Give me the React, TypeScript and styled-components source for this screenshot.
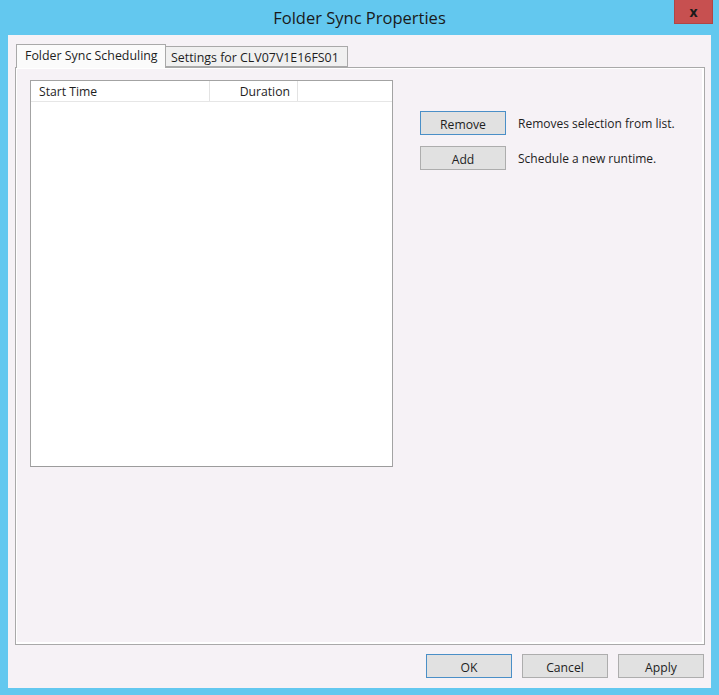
import React from "react";
import styled, { createGlobalStyle } from "styled-components";

const Global = createGlobalStyle`
  html, body { margin: 0; padding: 0; }
  body {
    background: #63c8ef;
    font-family: "Open Sans", "Noto Sans", "Liberation Sans", sans-serif;
    color: #1e1e1e;
  }
  * { box-sizing: border-box; }
`;

const Window = styled.div`
  width: 719px;
  height: 695px;
  background: #63c8ef;
  display: flex;
  flex-direction: column;
`;

const TitleBar = styled.div`
  height: 35px;
  display: grid;
  grid-template-columns: 1fr auto 1fr;
  align-items: start;
`;

const Title = styled.div`
  grid-column: 2;
  font-size: 16.5px;
  line-height: 35px;
  color: #1a1a1a;
`;

const CloseButton = styled.button`
  grid-column: 3;
  justify-self: end;
  margin-right: 6px;
  width: 39px;
  height: 24px;
  border: 1px solid #b04545;
  border-top: none;
  background: #c75050;
  color: #1a1a1a;
  font-family: "Open Sans", "Liberation Sans", sans-serif;
  font-weight: 700;
  font-size: 14px;
  line-height: 20px;
  padding: 0;
  display: flex;
  align-items: center;
  justify-content: center;
`;

const Client = styled.div`
  flex: 1;
  margin: 0 8px 7px 8px;
  background: #f6f2f6;
  display: flex;
  flex-direction: column;
  padding: 9px 6px 0 7px;
`;

const TabStrip = styled.div`
  display: flex;
  align-items: flex-end;
  height: 24px;
  padding-left: 1px;
  position: relative;
  z-index: 1;
  margin-bottom: -1px;
`;

const Tab = styled.div<{ $active?: boolean; $w: number }>`
  width: ${(p) => p.$w}px;
  font-size: 12.4px;
  border: 1px solid #a9a9a9;
  border-bottom: ${(p) => (p.$active ? "none" : "1px solid #a9a9a9")};
  background: ${(p) => (p.$active ? "#fbfbfb" : "#f0f0f0")};
  height: ${(p) => (p.$active ? "24px" : "21px")};
  padding: ${(p) => (p.$active ? "2px 0 0 8px" : "2px 0 0 5px")};
  margin-left: ${(p) => (p.$active ? "0" : "-1px")};
  margin-bottom: ${(p) => (p.$active ? "0" : "1px")};
  white-space: nowrap;
  line-height: 17px;
`;

const Panel = styled.div`
  height: 578px;
  border: 1px solid #a9a9a9;
  box-shadow: inset 1px 1px 0 #ffffff, inset -2px -2px 0 #ffffff;
  display: flex;
  align-items: flex-start;
  padding: 12px 0 0 14px;
`;

const ListBox = styled.div`
  width: 363px;
  height: 387px;
  border: 1px solid #a3a3a3;
  border-bottom-color: #9c9c9c;
  background: #ffffff;
  display: flex;
  flex-direction: column;
`;

const HeaderRow = styled.div`
  display: flex;
  height: 21px;
  border-bottom: 1px solid #e6e6e6;
  font-size: 12.2px;
`;

const HeaderCell = styled.div<{ $w: number; $right?: boolean }>`
  width: ${(p) => p.$w}px;
  border-right: 1px solid #e3e3e3;
  text-align: ${(p) => (p.$right ? "right" : "left")};
  padding: ${(p) => (p.$right ? "2px 7px 0 0" : "2px 0 0 8px")};
  line-height: 17px;
`;

const ActionColumn = styled.div`
  display: flex;
  flex-direction: column;
  gap: 11px;
  margin-left: 27px;
  margin-top: 31px;
`;

const ActionRow = styled.div`
  display: flex;
  align-items: center;
  gap: 12px;
`;

const Button = styled.button<{ $focused?: boolean }>`
  width: 86px;
  height: 24px;
  background: #e1e1e1;
  border: 1px solid ${(p) => (p.$focused ? "#4a8fc7" : "#adadad")};
  font-family: "Open Sans", "Noto Sans", "Liberation Sans", sans-serif;
  font-size: 12.2px;
  color: #1e1e1e;
  padding: 2px 0 0 0;
  line-height: 19px;
`;

const Hint = styled.span`
  font-size: 12px;
  padding-top: 1px;
`;

const Footer = styled.div`
  display: flex;
  justify-content: flex-end;
  gap: 10px;
  margin-top: 9px;
  padding-right: 1px;
`;

export default function App() {
  return (
    <>
      <Global />
      <Window>
        <TitleBar>
          <Title>Folder Sync Properties</Title>
          <CloseButton aria-label="Close">x</CloseButton>
        </TitleBar>
        <Client>
          <TabStrip>
            <Tab $active $w={150}>
              Folder Sync Scheduling
            </Tab>
            <Tab $w={183}>Settings for CLV07V1E16FS01</Tab>
          </TabStrip>
          <Panel>
            <ListBox>
              <HeaderRow>
                <HeaderCell $w={179}>Start Time</HeaderCell>
                <HeaderCell $w={88} $right>
                  Duration
                </HeaderCell>
              </HeaderRow>
            </ListBox>
            <ActionColumn>
              <ActionRow>
                <Button $focused>Remove</Button>
                <Hint>Removes selection from list.</Hint>
              </ActionRow>
              <ActionRow>
                <Button>Add</Button>
                <Hint>Schedule a new runtime.</Hint>
              </ActionRow>
            </ActionColumn>
          </Panel>
          <Footer>
            <Button $focused>OK</Button>
            <Button>Cancel</Button>
            <Button>Apply</Button>
          </Footer>
        </Client>
      </Window>
    </>
  );
}
